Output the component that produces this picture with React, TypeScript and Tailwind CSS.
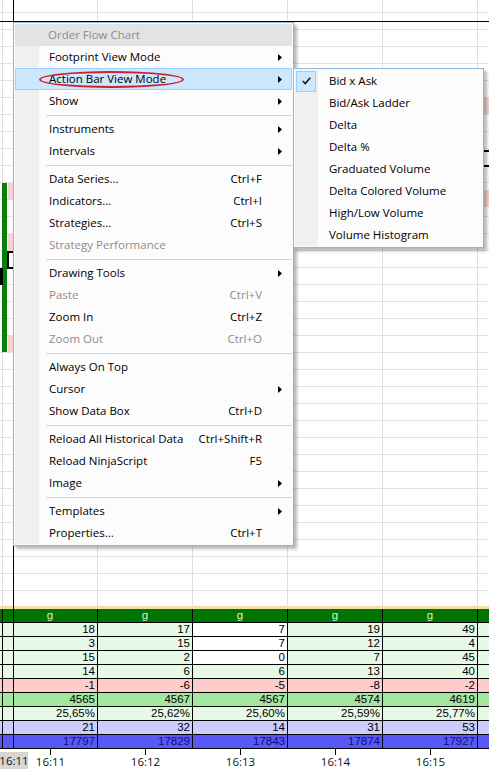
import React from "react";

type MenuItem =
  | { sep: true }
  | {
      sep?: false;
      label: string;
      shortcut?: string;
      sub?: boolean;
      disabled?: boolean;
      active?: boolean;
      header?: boolean;
    };

const mainItems: MenuItem[] = [
  { label: "Order Flow Chart", header: true, disabled: true },
  { label: "Footprint View Mode", sub: true },
  { label: "Action Bar View Mode", sub: true, active: true },
  { label: "Show", sub: true },
  { sep: true },
  { label: "Instruments", sub: true },
  { label: "Intervals", sub: true },
  { sep: true },
  { label: "Data Series...", shortcut: "Ctrl+F" },
  { label: "Indicators...", shortcut: "Ctrl+I" },
  { label: "Strategies...", shortcut: "Ctrl+S" },
  { label: "Strategy Performance", disabled: true },
  { sep: true },
  { label: "Drawing Tools", sub: true },
  { label: "Paste", shortcut: "Ctrl+V", disabled: true },
  { label: "Zoom In", shortcut: "Ctrl+Z" },
  { label: "Zoom Out", shortcut: "Ctrl+O", disabled: true },
  { sep: true },
  { label: "Always On Top" },
  { label: "Cursor", sub: true },
  { label: "Show Data Box", shortcut: "Ctrl+D" },
  { sep: true },
  { label: "Reload All Historical Data", shortcut: "Ctrl+Shift+R" },
  { label: "Reload NinjaScript", shortcut: "F5" },
  { label: "Image", sub: true },
  { sep: true },
  { label: "Templates", sub: true },
  { label: "Properties...", shortcut: "Ctrl+T" },
];

const subItems = [
  "Bid x Ask",
  "Bid/Ask Ladder",
  "Delta",
  "Delta %",
  "Graduated Volume",
  "Delta Colored Volume",
  "High/Low Volume",
  "Volume Histogram",
];

// table columns: values top to bottom, and backgrounds for the first 4 rows
const columns = [
  { vals: ["18", "3", "15", "14", "-1", "4565", "25,65%", "21", "17797"], top: ["g", "g", "g", "g"] },
  { vals: ["17", "15", "2", "6", "-6", "4567", "25,62%", "32", "17829"], top: ["g", "g", "g", "g"] },
  { vals: ["7", "7", "0", "6", "-5", "4567", "25,60%", "14", "17843"], top: ["w", "w", "w", "g"] },
  { vals: ["19", "12", "7", "13", "-8", "4574", "25,59%", "31", "17874"], top: ["g", "g", "g", "g"] },
  { vals: ["49", "4", "45", "40", "-2", "4619", "25,77%", "53", "17927"], top: ["g", "g", "g", "g"] },
];

const rowBg = ["", "", "", "", "bg-[#ffcccc]", "bg-[#a4e6a0]", "bg-[#e6f9e6]", "bg-[#ccccff]", "bg-[#5858f4]"];
const times = ["16:11", "16:12", "16:13", "16:14", "16:15"];

function Arrow() {
  return (
    <svg width="4" height="7" viewBox="0 0 4 7" className="block">
      <polygon points="0,0 4,3.5 0,7" fill="#000" />
    </svg>
  );
}

function MainMenu() {
  return (
    <div className="absolute left-[13px] top-[22px] w-[281px] border border-[#8cb6dc] bg-[#fcfcfc] p-[1px] shadow-[3px_3px_3px_rgba(0,0,0,0.28)] font-['Open_Sans',sans-serif] text-[11.5px] text-black">
      {mainItems.map((it, i) => {
        if (it.sep) {
          return (
            <div key={i} className="flex h-[6px]">
              <div className="w-[24px] bg-[#f0f0f0]" />
              <div className="flex flex-1 items-center pl-[7px]">
                <div className="h-px w-full bg-[#d5d5d5]" />
              </div>
            </div>
          );
        }
        const rowCls = it.header
          ? "bg-[#e3e3e3]"
          : it.active
          ? "bg-[#cce8ff] border border-[#99d1ff]"
          : "";
        return (
          <div key={i} className={`relative flex h-[22px] items-center ${rowCls}`}>
            <div className={`self-stretch ${it.header || it.active ? "w-[23px]" : "w-[24px] bg-[#f0f0f0]"}`} />
            <span className={`flex-1 pl-[10px] ${it.disabled ? "text-[#8d8d8d]" : ""}`}>{it.label}</span>
            {it.shortcut && (
              <span className={`pr-[30px] ${it.disabled ? "text-[#8d8d8d]" : ""}`}>{it.shortcut}</span>
            )}
            {it.sub && (
              <span className={it.active ? "pr-[9px]" : "pr-[10px]"}>
                <Arrow />
              </span>
            )}
            {it.active && (
              <div className="absolute left-[23px] top-[2px] h-[17px] w-[145px] rounded-[50%] border-2 border-[#d01f2c]" />
            )}
          </div>
        );
      })}
    </div>
  );
}

function SubMenu() {
  return (
    <div className="absolute left-[293px] top-[68px] w-[191px] border border-[#8cb6dc] bg-[#fcfcfc] p-[1px] shadow-[3px_3px_3px_rgba(0,0,0,0.28)] font-['Open_Sans',sans-serif] text-[11.5px] text-black">
      {subItems.map((s, i) => (
        <div key={s} className="flex h-[22px] items-center">
          <div className="flex w-[23px] items-center self-stretch bg-[#f0f0f0] pl-[1px]">
            {i === 0 && (
              <div className="flex h-[21px] w-[20px] items-center justify-center border border-[#99d1ff] bg-[#cce8ff]">
                <svg width="9" height="8" viewBox="0 0 9 8">
                  <polyline points="0.8,4 3.3,6.6 8.2,0.8" fill="none" stroke="#1a1a1a" strokeWidth="1.6" />
                </svg>
              </div>
            )}
          </div>
          <span className="pl-[11px]">{s}</span>
        </div>
      ))}
    </div>
  );
}

export default function App() {
  return (
    <div className="relative h-[770px] w-[489px] overflow-hidden bg-white font-['Liberation_Sans',Arial,sans-serif]">
      {/* chart grid */}
      <div className="relative flex h-[606px] bg-[linear-gradient(to_bottom,transparent_12px,#e2e2e2_12px,#e2e2e2_13px,transparent_13px)] bg-[length:100%_17px]">
        <div className="w-[3px] border-r border-[#dedede]" />
        {columns.map((_, i) => (
          <div key={i} className="w-[95px] border-r border-[#dedede]" />
        ))}
        <div className="flex-1" />

        {/* left bar */}
        <div className="absolute left-[2px] top-[183px] h-[169px] w-[5px] bg-[#088008]" />
        <div className="absolute left-[8px] top-[183px] h-[17px] w-[5px] bg-[#f7d2d2]" />
        <div className="absolute left-[8px] top-[234px] h-[17px] w-[5px] bg-[#f7d2d2]" />
        <div className="absolute left-[8px] top-[335px] h-[17px] w-[5px] bg-[#f7d2d2]" />
        <div className="absolute left-[7px] top-[251px] h-[18px] w-[7px] border-y-2 border-l-2 border-black" />
        <div className="absolute left-0 top-[268px] h-[17px] w-[3px] bg-black" />

        {/* right edge marks */}
        <div className="absolute left-[484px] top-[98px] h-[16px] w-[5px] bg-[#f7d2d2]" />
        <div className="absolute left-[484px] top-[190px] h-[17px] w-[5px] bg-[#f7d2d2]" />
        <div className="absolute left-[483px] top-[150px] h-[2px] w-[6px] bg-black" />
        <div className="absolute left-[483px] top-[165px] h-[2px] w-[6px] bg-black" />
      </div>

      {/* separator above table */}
      <div className="h-[3px] bg-[#f2e0a8]" />

      {/* table */}
      <div className="text-[11.5px] leading-none">
        <div className="flex h-[14px] border-b border-black bg-[#007400] text-[#d6f6d0]">
          <div className="w-[3px] border-r border-black" />
          {columns.map((_, i) => (
            <div key={i} className="flex w-[95px] items-center justify-center border-r border-black">
              g
            </div>
          ))}
          <div className="flex-1" />
        </div>
        {rowBg.map((bg, r) => {
          const cellBg = (c: number) => {
            if (bg) return bg;
            return columns[c].top[r] === "w" ? "bg-white" : "bg-[#e6f9e6]";
          };
          return (
            <div key={r} className={`flex h-[14px] border-b border-black ${r === 8 ? "text-[#10107a]" : "text-black"}`}>
              <div className={`w-[3px] border-r border-black ${cellBg(0)}`} />
              {columns.map((col, c) => (
                <div key={c} className={`flex w-[95px] items-center justify-end border-r border-black pr-[2px] ${cellBg(c)}`}>
                  {col.vals[r]}
                </div>
              ))}
              <div className={`flex-1 ${bg || "bg-[#e6f9e6]"}`} />
            </div>
          );
        })}
      </div>

      {/* time axis */}
      <div className="relative flex h-[21px] font-['Open_Sans',sans-serif] text-[11.5px] text-[#111]">
        <div className="w-[3px]" />
        {times.map((t) => (
          <div key={t} className="flex w-[95px] flex-col items-center">
            <div className="h-[6px] w-px bg-black" />
            <span className="leading-[14px]">{t}</span>
          </div>
        ))}
        <div className="absolute left-0 top-[3px] flex h-[17px] w-[28px] items-center justify-center bg-[#d6d6d6]">
          16:11
        </div>
      </div>

      {/* crosshair */}
      <div className="absolute left-[13px] top-0 h-[749px] w-px bg-black" />
      <div className="absolute left-0 top-[21px] h-px w-[489px] bg-black" />

      <MainMenu />
      <SubMenu />
    </div>
  );
}
